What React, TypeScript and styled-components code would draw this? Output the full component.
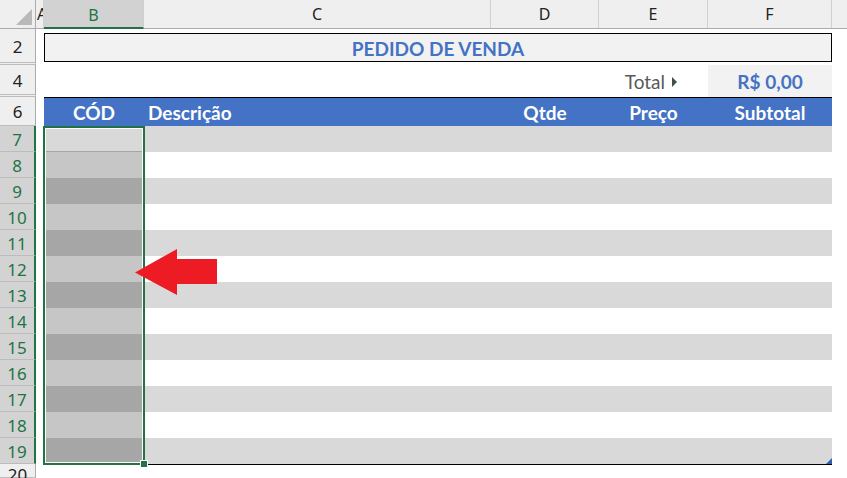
import React from 'react';
import styled, {createGlobalStyle} from 'styled-components';

const GREEN = '#217346';
const BLUE = '#4472c4';

const COLS: {[key: string]: number} = {
  A: 8,
  B: 100,
  C: 347,
  D: 108,
  E: 109,
  F: 124,
};

const GlobalStyle = createGlobalStyle`
  html, body {
    margin: 0;
    padding: 0;
    background: #ffffff;
    overflow: hidden;
  }
`;

const dataRows = [7, 8, 9, 10, 11, 12, 13, 14, 15, 16, 17, 18, 19];

const App = () => {
  return (
    <>
      <GlobalStyle />
      <Sheet>
        <ColumnHeaderBar>
          <Corner />
          <ColHead $w={COLS.A}>
            <ClippedLetter>A</ClippedLetter>
          </ColHead>
          <ColHead $w={COLS.B} $selected>
            B
          </ColHead>
          <ColHead $w={COLS.C}>C</ColHead>
          <ColHead $w={COLS.D}>D</ColHead>
          <ColHead $w={COLS.E}>E</ColHead>
          <ColHead $w={COLS.F}>F</ColHead>
          <ColFiller />
        </ColumnHeaderBar>

        <Row $h={36}>
          <RowHead $hiddenBelow>2</RowHead>
          <Cell $w={COLS.A} />
          <TitleCell>
            <TitleBox>PEDIDO DE VENDA</TitleBox>
          </TitleCell>
        </Row>

        <Row $h={32}>
          <RowHead $hiddenBelow>4</RowHead>
          <Cell $w={COLS.A} />
          <Cell $w={COLS.B} />
          <Cell $w={COLS.C} />
          <Cell $w={COLS.D} />
          <TotalLabel $w={COLS.E}>
            Total <Caret />
          </TotalLabel>
          <TotalValue $w={COLS.F}>R$ 0,00</TotalValue>
        </Row>

        <Row $h={29}>
          <RowHead>6</RowHead>
          <Cell $w={COLS.A} />
          <TableHeader>
            <HeadCell $w={COLS.B} $align="center">CÓD</HeadCell>
            <HeadCell $w={COLS.C} $align="left">Descrição</HeadCell>
            <HeadCell $w={COLS.D} $align="center">Qtde</HeadCell>
            <HeadCell $w={COLS.E} $align="center">Preço</HeadCell>
            <HeadCell $w={COLS.F} $align="center">Subtotal</HeadCell>
          </TableHeader>
        </Row>

        {dataRows.map((n) => {
          const banded = n % 2 === 1;
          const codShade = n === 7 ? '#d9d9d9' : banded ? '#a6a6a6' : '#c6c6c6';
          const band = banded ? '#d9d9d9' : '#ffffff';
          return (
            <Row key={n} $h={26}>
              <RowHead $selected>{n}</RowHead>
              <Cell $w={COLS.A} />
              <CodCell $w={COLS.B} $bg={codShade} $first={n === 7} />
              <Cell $w={COLS.C} $bg={band} />
              <Cell $w={COLS.D} $bg={band} />
              <Cell $w={COLS.E} $bg={band} />
              <Cell $w={COLS.F} $bg={band} />
            </Row>
          );
        })}

        <Row $h={14}>
          <RowHead $last>20</RowHead>
        </Row>

        <TableBottom />
        <ResizeMark />
        <Selection>
          <FillHandle />
        </Selection>

        <Arrow width="83" height="47" viewBox="0 0 83 47">
          <path d="M0 23.5 L42 0 L42 10 L82 10 L82 35 L42 35 L42 46 Z" fill="#ed1c24" />
        </Arrow>
      </Sheet>
    </>
  );
};

const Sheet = styled.div`
  position: relative;
  width: 847px;
  height: 478px;
  overflow: hidden;
  background: #ffffff;
  font-family: Lato, 'Liberation Sans', sans-serif;
`;

const ColumnHeaderBar = styled.div`
  display: flex;
  height: 29px;
  box-sizing: border-box;
  background: #efefef;
  border-bottom: 1px solid #ababab;
`;

const Corner = styled.div`
  position: relative;
  width: 36px;
  flex-shrink: 0;
  border-right: 1px solid #ababab;
  box-sizing: border-box;

  &::after {
    content: '';
    position: absolute;
    right: 3px;
    bottom: 3px;
    border-style: solid;
    border-width: 0 0 16px 16px;
    border-color: transparent transparent #b9b9b9 transparent;
  }
`;

const ColHead = styled.div<{$w: number; $selected?: boolean}>`
  width: ${(p) => p.$w}px;
  flex-shrink: 0;
  box-sizing: border-box;
  display: flex;
  align-items: center;
  justify-content: center;
  overflow: hidden;
  font-family: 'Noto Sans', 'Open Sans', sans-serif;
  font-size: 16px;
  color: ${(p) => (p.$selected ? GREEN : '#222222')};
  background: ${(p) => (p.$selected ? '#d2d2d2' : 'transparent')};
  border-right: 1px solid #d0d0d0;
  border-bottom: ${(p) => (p.$selected ? `2px solid ${GREEN}` : 'none')};
  margin-bottom: ${(p) => (p.$selected ? '-1px' : '0')};
  padding-top: ${(p) => (p.$selected ? '2px' : '0')};
`;

const ClippedLetter = styled.span`
  display: block;
  width: 7px;
  margin-left: 1px;
  overflow: hidden;
`;

const ColFiller = styled.div`
  flex: 1;
`;

const Row = styled.div<{$h: number}>`
  display: flex;
  height: ${(p) => p.$h}px;
`;

const RowHead = styled.div<{$selected?: boolean; $hiddenBelow?: boolean; $last?: boolean}>`
  width: 36px;
  flex-shrink: 0;
  box-sizing: border-box;
  display: flex;
  align-items: ${(p) => (p.$last ? 'flex-start' : 'center')};
  justify-content: center;
  font-family: 'Noto Sans', 'Open Sans', sans-serif;
  font-size: 17px;
  color: ${(p) => (p.$selected ? GREEN : '#222222')};
  background: ${(p) => (p.$selected ? '#d3d3d3' : '#efefef')};
  border-right: ${(p) => (p.$selected ? `2px solid ${GREEN}` : '1px solid #ababab')};
  border-bottom: ${(p) => (p.$hiddenBelow ? '3px double #bcbcbc' : '1px solid #bcbcbc')};
  padding-top: ${(p) => (p.$last ? '2px' : '1px')};
  line-height: 1;
`;

const Cell = styled.div<{$w: number; $bg?: string}>`
  width: ${(p) => p.$w}px;
  flex-shrink: 0;
  background: ${(p) => p.$bg || '#ffffff'};
`;

const CodCell = styled(Cell)<{$first?: boolean}>`
  box-sizing: border-box;
  border-bottom: ${(p) => (p.$first ? '1px solid #a6a6a6' : 'none')};
`;

const TitleCell = styled.div`
  width: ${COLS.B + COLS.C + COLS.D + COLS.E + COLS.F}px;
  flex-shrink: 0;
  padding: 4px 0 3px;
  box-sizing: border-box;
`;

const TitleBox = styled.div`
  height: 100%;
  box-sizing: border-box;
  border: 1px solid #000000;
  background: #f2f2f2;
  display: flex;
  align-items: center;
  justify-content: center;
  font-weight: 700;
  font-size: 19px;
  color: ${BLUE};
  padding-top: 1px;
`;

const TotalLabel = styled.div<{$w: number}>`
  width: ${(p) => p.$w}px;
  flex-shrink: 0;
  box-sizing: border-box;
  display: flex;
  align-items: center;
  justify-content: flex-end;
  gap: 7px;
  padding-right: 31px;
  font-size: 19px;
  color: #595959;
`;

const Caret = styled.span`
  width: 0;
  height: 0;
  border-style: solid;
  border-width: 5px 0 5px 5px;
  border-color: transparent transparent transparent #3f4f4f;
  margin-top: 1px;
`;

const TotalValue = styled.div<{$w: number}>`
  width: ${(p) => p.$w}px;
  flex-shrink: 0;
  display: flex;
  align-items: center;
  justify-content: center;
  background: #f2f2f2;
  font-weight: 700;
  font-size: 19px;
  color: ${BLUE};
`;

const TableHeader = styled.div`
  display: flex;
  background: ${BLUE};
  border-top: 1px solid #000000;
  box-sizing: border-box;
`;

const HeadCell = styled.div<{$w: number; $align: 'left' | 'center'}>`
  width: ${(p) => p.$w}px;
  flex-shrink: 0;
  box-sizing: border-box;
  display: flex;
  align-items: center;
  justify-content: ${(p) => (p.$align === 'left' ? 'flex-start' : 'center')};
  padding-left: ${(p) => (p.$align === 'left' ? '4px' : '0')};
  color: #ffffff;
  font-weight: 700;
  font-size: 19px;
`;

const TableBottom = styled.div`
  position: absolute;
  left: 44px;
  top: 464px;
  width: 788px;
  height: 1px;
  background: #000000;
`;

const ResizeMark = styled.div`
  position: absolute;
  left: 826px;
  top: 458px;
  width: 0;
  height: 0;
  border-style: solid;
  border-width: 0 0 6px 6px;
  border-color: transparent transparent #3060b0 transparent;
`;

const Selection = styled.div`
  position: absolute;
  left: 43px;
  top: 126px;
  width: 102px;
  height: 339px;
  box-sizing: border-box;
  border: 2px solid ${GREEN};
  box-shadow: inset 0 0 0 1px #ffffff;
`;

const FillHandle = styled.div`
  position: absolute;
  right: -5px;
  bottom: -5px;
  width: 6px;
  height: 6px;
  background: ${GREEN};
  border: 1px solid #ffffff;
`;

const Arrow = styled.svg`
  position: absolute;
  left: 135px;
  top: 249px;
`;

export default App;
